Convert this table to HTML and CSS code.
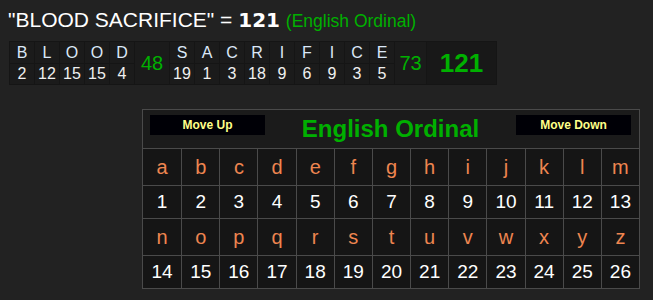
FILE: index.html
```html
<!DOCTYPE html>
<html>
<head>
<meta charset="utf-8">
<link rel="stylesheet" href="styles.css">
</head>
<body>
<div class="title">"BLOOD SACRIFICE" = <b class="total">121</b> <span class="cipher-name">(English Ordinal)</span></div>
<table class="breakdown">
  <tr>
    <td class="ltr">B</td><td class="ltr">L</td><td class="ltr">O</td><td class="ltr">O</td><td class="ltr">D</td>
    <td class="wsum" rowspan="2">48</td>
    <td class="ltr">S</td><td class="ltr">A</td><td class="ltr">C</td><td class="ltr">R</td><td class="ltr">I</td><td class="ltr">F</td><td class="ltr">I</td><td class="ltr">C</td><td class="ltr">E</td>
    <td class="wsum wsum2" rowspan="2">73</td>
    <td class="grand" rowspan="2">121</td>
  </tr>
  <tr>
    <td class="num">2</td><td class="num">12</td><td class="num">15</td><td class="num">15</td><td class="num">4</td>
    <td class="num">19</td><td class="num">1</td><td class="num">3</td><td class="num">18</td><td class="num">9</td><td class="num">6</td><td class="num">9</td><td class="num">3</td><td class="num">5</td>
  </tr>
</table>

<div class="chart-wrap">
  <div class="chart">
    <div class="chart-head">
      <button class="move">Move Up</button>
      <div class="chart-title">English Ordinal</div>
      <button class="move">Move Down</button>
    </div>
    <div class="grid">
      <div class="c l">a</div><div class="c l">b</div><div class="c l">c</div><div class="c l">d</div><div class="c l">e</div><div class="c l">f</div><div class="c l">g</div><div class="c l">h</div><div class="c l">i</div><div class="c l">j</div><div class="c l">k</div><div class="c l">l</div><div class="c l">m</div>
      <div class="c n">1</div><div class="c n">2</div><div class="c n">3</div><div class="c n">4</div><div class="c n">5</div><div class="c n">6</div><div class="c n">7</div><div class="c n">8</div><div class="c n">9</div><div class="c n">10</div><div class="c n">11</div><div class="c n">12</div><div class="c n">13</div>
      <div class="c l">n</div><div class="c l">o</div><div class="c l">p</div><div class="c l">q</div><div class="c l">r</div><div class="c l">s</div><div class="c l">t</div><div class="c l">u</div><div class="c l">v</div><div class="c l">w</div><div class="c l">x</div><div class="c l">y</div><div class="c l">z</div>
      <div class="c n">14</div><div class="c n">15</div><div class="c n">16</div><div class="c n">17</div><div class="c n">18</div><div class="c n">19</div><div class="c n">20</div><div class="c n">21</div><div class="c n">22</div><div class="c n">23</div><div class="c n">24</div><div class="c n">25</div><div class="c n">26</div>
    </div>
  </div>
</div>
</body>
</html>
```
FILE: styles.css
```css
html, body {
  margin: 0;
  padding: 0;
  background: #222222;
  font-family: "Liberation Sans", Arial, sans-serif;
  color: #ffffff;
}
body {
  padding: 8px 0 0 8px;
  height: 292px;
  overflow: hidden;
}
.title {
  font-size: 21px;
  line-height: 24px;
  color: #ffffff;
  white-space: nowrap;
}
.total {
  font-family: "DejaVu Sans", sans-serif;
  font-weight: bold;
  font-size: 20px;
}
.cipher-name {
  color: #00b000;
  font-size: 17.5px;
}
.breakdown {
  margin-top: 8px;
  margin-left: 1px;
  border-collapse: collapse;
  background: #1b1b1b;
}
.breakdown td {
  padding: 0;
  text-align: center;
  border: 1px solid #151515;
  font-size: 16px;
}
.breakdown .ltr {
  width: 24px;
  height: 21px;
  color: #dbe8f8;
}
.breakdown .num {
  width: 24px;
  height: 20px;
  color: #f0f0f0;
}
.breakdown .wsum {
  width: 34px;
  color: #00b000;
  font-size: 20px;
}
.breakdown .wsum2 {
  width: 31px;
}
.breakdown .grand {
  width: 69px;
  color: #00b000;
  font-size: 26px;
  font-weight: bold;
  background: #181818;
}
.chart-wrap {
  display: flex;
  padding-left: 134px;
  margin-top: 24px;
}
.chart {
  width: 496px;
  border: 1px solid #4a4a4a;
  background: #1b1b1b;
}
.chart-head {
  height: 38px;
  box-sizing: border-box;
  display: flex;
  align-items: flex-start;
  justify-content: space-between;
  padding: 5px 8px 0 7px;
}
.move {
  width: 115px;
  height: 20px;
  background: #000006;
  border: none;
  color: #ffff88;
  font-family: "Liberation Sans", Arial, sans-serif;
  font-weight: bold;
  font-size: 12px;
  padding: 0;
}
.chart-title {
  color: #00b000;
  font-weight: bold;
  font-size: 24px;
  line-height: 28px;
  margin-top: 0;
}
.grid {
  display: grid;
  grid-template-columns: repeat(13, 1fr);
  grid-template-rows: 37px 33px 37px 33px;
  background: #151515;
}
.c {
  display: flex;
  align-items: center;
  justify-content: center;
  border-top: 1px solid #4a4a4a;
  border-left: 1px solid #4a4a4a;
  font-size: 19px;
}
.c:nth-child(13n+1) {
  border-left: none;
}
.l {
  color: #ee8550;
  font-size: 20px;
}
.n {
  color: #ffffff;
}
```
